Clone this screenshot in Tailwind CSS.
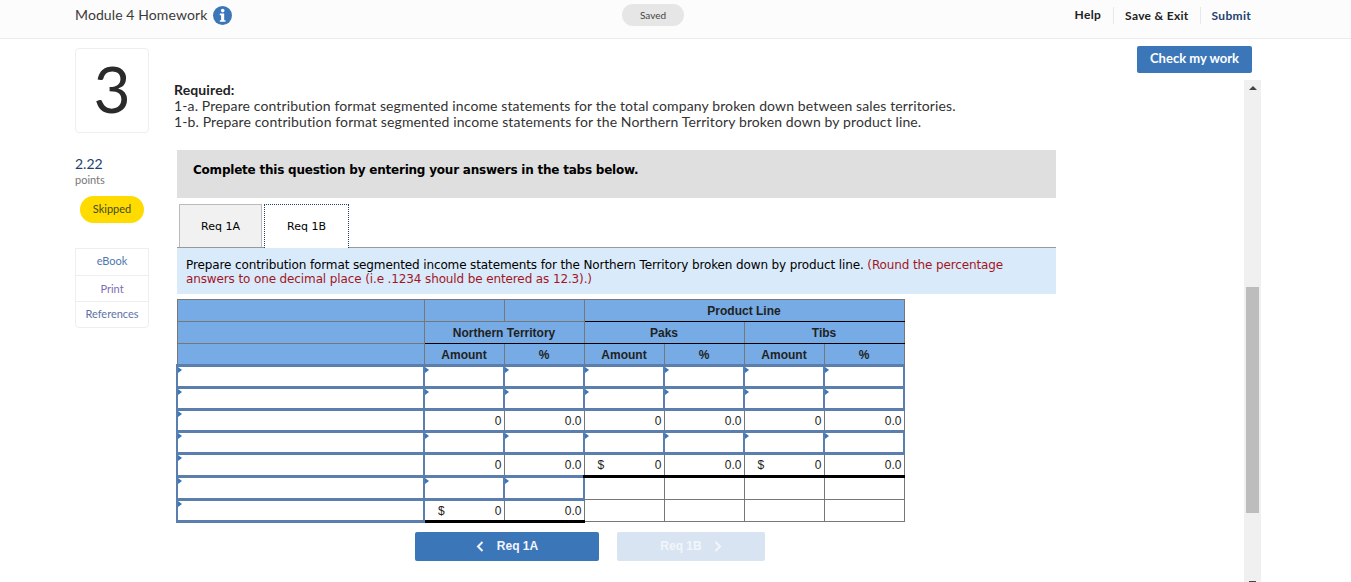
<!DOCTYPE html>
<html lang="en">
<head>
  <meta charset="UTF-8" />
  <title>Module 4 Homework</title>
  <script src="https://cdn.jsdelivr.net/npm/@tailwindcss/browser@4"></script>
</head>
<body class="bg-white h-[582px] overflow-hidden font-['Lato',sans-serif] text-[#2d2d2d]">

  <!-- Header -->
  <header class="h-[39px] bg-[#fcfcfc] border-b border-[#ececec] flex items-center pl-[75px] pb-[8px]">
    <div class="w-[547px] flex items-center">
      <span class="text-[14px] tracking-[0.1px] text-[#3a3a3a] mt-[-2px]">Module 4 Homework</span>
      <svg class="ml-[6px]" width="19" height="19" viewBox="0 0 19 19">
        <circle cx="9.5" cy="9.5" r="9.5" fill="#3b76b9"/>
        <circle cx="9.7" cy="4.6" r="1.8" fill="#fff"/>
        <path d="M6.8 7.6h4.4v6.6h1.3v1.6H6.8v-1.6h1.3v-5H6.8z" fill="#fff"/>
      </svg>
    </div>
    <div class="w-[62px] h-[22px] rounded-full bg-[#e6e6e6] flex items-center justify-center text-[10px] text-[#444]">Saved</div>
    <nav class="ml-auto flex items-center font-bold text-[12px] tracking-[0.3px] mr-[100px]">
      <span class="pr-[12px] text-[#222]">Help</span>
      <span class="border-l border-[#e8e8e8] px-[11px] h-[17px] leading-[17px] text-[#222]">Save &amp; Exit</span>
      <span class="border-l border-[#e8e8e8] pl-[11px] h-[17px] leading-[17px] text-[#1d3f72]">Submit</span>
    </nav>
  </header>

  <div class="flex h-[543px]">
    <!-- Left rail -->
    <aside class="ml-[75px] w-[74px] shrink-0 pt-[9px]">
      <div class="h-[85px] border border-[#eeeeee] rounded-[4px] flex items-center justify-center pb-[3px] text-[64px] font-normal text-[#2b2b2b] leading-none">3</div>
      <div class="mt-[22px] text-[14px] leading-[17px] text-[#1d3f72]">2.22</div>
      <div class="text-[11px] leading-[15px] text-[#777]">points</div>
      <div class="mt-[9px] ml-[5px] w-[64px] h-[27px] rounded-full bg-[#ffdb00] flex items-center justify-center text-[11px] text-[#3f4a20]">Skipped</div>
      <div class="mt-[25px] border border-[#eeeeee] rounded-b-[4px] text-[11px] text-center">
        <div class="h-[27px] leading-[24px] text-[#4f79ad] border-b border-[#eeeeee]">eBook</div>
        <div class="h-[26px] leading-[25px] text-[#7b6fb3] border-b border-[#eeeeee]">Print</div>
        <div class="h-[25px] leading-[24px] text-[#5f72a8]">References</div>
      </div>
    </aside>

    <!-- Question -->
    <main class="ml-[28px] w-[879px] shrink-0">
      <div class="mt-[43px] ml-[-3px] text-[14px] leading-[16px] tracking-[0.12px] text-[#333]">
        <div class="font-bold text-[#222]">Required:</div>
        <div>1-a. Prepare contribution format segmented income statements for the total company broken down between sales territories.</div>
        <div>1-b. Prepare contribution format segmented income statements for the Northern Territory broken down by product line.</div>
      </div>

      <div class="mt-[20px] h-[48px] bg-[#dfdfdf] pl-[16px] flex items-center pb-[9px] font-['DejaVu_Sans',sans-serif] font-bold text-[12px] tracking-[-0.22px] text-black">Complete this question by entering your answers in the tabs below.</div>

      <!-- Tabs -->
      <div class="mt-[5px] h-[45px] pl-[2px] flex items-end gap-[2px] border-b border-[#999] font-['DejaVu_Sans',sans-serif] text-[11px] text-black">
        <div class="w-[83px] h-[43px] pt-[2px] bg-[#f1f1f1] border border-b-0 border-[#bbbbbb] flex items-center justify-center">Req 1A</div>
        <div class="w-[85px] h-[44px] pt-[1px] bg-white border border-dotted border-b-0 border-[#1f3f6e] flex items-center justify-center mb-[-1px]">Req 1B</div>
      </div>

      <div class="h-[46px] bg-[#d9eafa] pl-[9px] pr-[30px] pt-[10px] font-['DejaVu_Sans',sans-serif] text-[12px] leading-[14px] tracking-[-0.12px] text-black">
        Prepare contribution format segmented income statements for the Northern Territory broken down by product line. <span class="text-[#a3161f]">(Round the percentage answers to one decimal place (i.e .1234 should be entered as 12.3).)</span>
      </div>

      <!-- Table, rows are filled in below -->
      <table id="sheet" class="mt-[5px] ml-[-1px] table-fixed border-collapse w-[727px] font-['Liberation_Sans',sans-serif] text-[12px] text-[#222]">
        <colgroup>
          <col class="w-[247px]"><col class="w-[80px]"><col class="w-[80px]"><col class="w-[80px]"><col class="w-[80px]"><col class="w-[80px]"><col class="w-[80px]">
        </colgroup>
        <thead class="bg-[#76abe5] font-bold">
          <tr class="h-[22px]">
            <th class="border border-[#777]"></th>
            <th class="border border-[#777]"></th>
            <th class="border border-[#777]"></th>
            <th colspan="4" class="border border-[#777] border-b-black font-bold">Product Line</th>
          </tr>
          <tr class="h-[22px]">
            <th class="border border-[#777]"></th>
            <th colspan="2" class="border border-[#777] border-b-black font-bold">Northern Territory</th>
            <th colspan="2" class="border border-[#777] border-t-black border-b-black font-bold">Paks</th>
            <th colspan="2" class="border border-[#777] border-t-black border-b-black font-bold">Tibs</th>
          </tr>
          <tr class="h-[22px]">
            <th class="border border-[#777]"></th>
            <th class="border border-[#777] border-t-black font-bold pt-[1px]">Amount</th>
            <th class="border border-[#777] border-t-black font-bold pt-[1px]">%</th>
            <th class="border border-[#777] border-t-black font-bold pt-[1px]">Amount</th>
            <th class="border border-[#777] border-t-black font-bold pt-[1px]">%</th>
            <th class="border border-[#777] border-t-black font-bold pt-[1px]">Amount</th>
            <th class="border border-[#777] border-t-black font-bold pt-[1px]">%</th>
          </tr>
        </thead>
        <tbody id="rows"></tbody>
      </table>

      <!-- Prev / next -->
      <div class="mt-[9px] ml-[238px] flex gap-[18px] font-['Liberation_Sans',sans-serif] font-bold text-[12px]">
        <div class="w-[184px] h-[29px] pb-[1px] bg-[#3b76b9] rounded-[2px] text-[#f4f4ff] flex items-center justify-center gap-[12px]">
          <svg width="8" height="11" viewBox="0 0 8 11"><path d="M6.5 1 2 5.5 6.5 10" fill="none" stroke="#f4f4ff" stroke-width="2"/></svg>
          <span class="ml-[1px]">Req 1A</span>
        </div>
        <div class="w-[148px] h-[29px] pb-[1px] bg-[#d9e4f2] rounded-[2px] text-[#f2f6fb] flex items-center justify-center gap-[12px]">
          <span>Req 1B</span>
          <svg width="8" height="11" viewBox="0 0 8 11"><path d="M1.5 1 6 5.5 1.5 10" fill="none" stroke="#f2f6fb" stroke-width="2"/></svg>
        </div>
      </div>
    </main>

    <!-- Right column -->
    <div class="ml-[81px] w-[124px] shrink-0 flex flex-col">
      <div class="mt-[7px] w-[115px] h-[27px] pb-[1px] bg-[#3b76b9] rounded-[2px] text-white font-bold text-[13px] flex items-center justify-center">Check my work</div>
      <div class="mt-[7px] ml-auto w-[17px] flex-1 bg-[#f0f0f0] flex flex-col items-center">
        <div class="mt-[6px] w-0 h-0 border-x-[4px] border-x-transparent border-b-[4px] border-b-[#444]"></div>
        <div class="mt-[197px] w-[13px] h-[226px] bg-[#bdbdbd]"></div>
        <div class="mt-auto w-[7px] h-[1px] bg-[#444]"></div>
      </div>
    </div>
  </div>

  <script>
    // i = input cell, e = empty cell, anything else is a calculated value ("$" prefix = dollar sign)
    const rowData = [
      "iiiiiii", "iiiiiii",
      ["i", "0", "0.0", "0", "0.0", "0", "0.0"],
      "iiiiiii",
      ["i", "0", "0.0", "$0", "0.0", "$0", "0.0"],
      "iiieeee",
      ["i", "$0", "0.0", "e", "e", "e", "e"],
    ];
    // rows whose calculated cells close with a heavy total line
    const totalBelow = { 4: [3, 4, 5, 6], 6: [1, 2] };

    const flag = `<span class="absolute left-0 top-0 w-0 h-0 border-y-[3.5px] border-y-transparent border-l-[4px] border-l-[#3b76b9]"></span>`;

    function cell(val, rowIdx, colIdx) {
      if (val === "i") {
        return `<td class="border-x-2 border-y-[3px] border-[#5a7fae] p-0 relative">${flag}</td>`;
      }
      if (val === "e") {
        return `<td class="border border-[#777] p-0"></td>`;
      }
      const heavy = (totalBelow[rowIdx] || []).includes(colIdx);
      const bottom = heavy ? "border-b-[3px] border-b-black" : "border-b border-b-[#777]";
      const dollar = val[0] === "$";
      const num = dollar ? val.slice(1) : val;
      return `<td class="border-x border-x-[#777] border-t border-t-black ${bottom} p-0 pl-[3px] pr-[2px]">
        <div class="flex justify-between"><span class="pl-[10px]">${dollar ? "$" : ""}</span><span>${num}</span></div></td>`;
    }

    document.getElementById("rows").innerHTML = rowData.map((row, r) => {
      const cols = typeof row === "string" ? row.split("") : row;
      const h = r === 5 || r === 4 ? "h-[23px]" : "h-[22px]";
      return `<tr class="${h}">${cols.map((v, c) => cell(v, r, c)).join("")}</tr>`;
    }).join("");
  </script>
</body>
</html>
